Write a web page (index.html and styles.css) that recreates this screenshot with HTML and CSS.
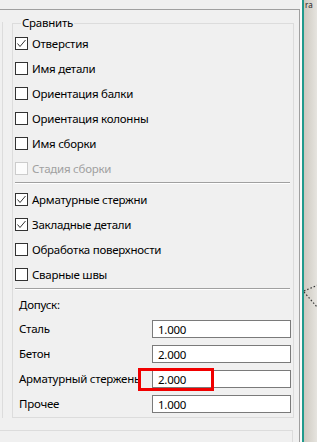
FILE: index.html
```html
<!DOCTYPE html>
<html lang="ru">
  <head>
    <meta charset="UTF-8" />
    <title>Сравнить</title>
    <link rel="stylesheet" href="styles.css">
  </head>
  <body>
    <div class="screen">
      <div class="panel">
        <div class="frame">
          <div class="page">
            <div class="group">
              <span class="legend">Сравнить</span>

              <label class="check-row">
                <span class="box checked"><svg width="11" height="11" viewBox="0 0 11 11"><polyline points="1.5,5.5 4,8.5 9.5,2" /></svg></span>
                Отверстия
              </label>
              <label class="check-row">
                <span class="box"></span>
                Имя детали
              </label>
              <label class="check-row">
                <span class="box"></span>
                Ориентация балки
              </label>
              <label class="check-row">
                <span class="box"></span>
                Ориентация колонны
              </label>
              <label class="check-row">
                <span class="box"></span>
                Имя сборки
              </label>
              <label class="check-row disabled">
                <span class="box"></span>
                Стадия сборки
              </label>

              <div class="separator first"></div>

              <label class="check-row">
                <span class="box checked"><svg width="11" height="11" viewBox="0 0 11 11"><polyline points="1.5,5.5 4,8.5 9.5,2" /></svg></span>
                Арматурные стержни
              </label>
              <label class="check-row">
                <span class="box checked"><svg width="11" height="11" viewBox="0 0 11 11"><polyline points="1.5,5.5 4,8.5 9.5,2" /></svg></span>
                Закладные детали
              </label>
              <label class="check-row">
                <span class="box"></span>
                Обработка поверхности
              </label>
              <label class="check-row">
                <span class="box"></span>
                Сварные швы
              </label>

              <div class="separator"></div>

              <div class="tol-title">Допуск:</div>

              <div class="tol-row">
                <span class="tol-label">Сталь</span>
                <input class="tol-input" type="text" value="1.000">
              </div>
              <div class="tol-row">
                <span class="tol-label">Бетон</span>
                <input class="tol-input" type="text" value="2.000">
              </div>
              <div class="tol-row">
                <span class="tol-label">Арматурный стержень</span>
                <input class="tol-input" type="text" value="2.000">
                <span class="highlight"></span>
              </div>
              <div class="tol-row">
                <span class="tol-label">Прочее</span>
                <input class="tol-input" type="text" value="1.000">
              </div>
            </div>
          </div>
          <div class="bottom-box"></div>
        </div>
      </div>
      <div class="teal"></div>
      <div class="side">
        <span class="side-text">ra</span>
        <svg class="side-lines" width="14" height="26" viewBox="0 0 14 26">
          <line x1="0" y1="8" x2="14" y2="2" />
          <line x1="0" y1="9" x2="13" y2="24" />
        </svg>
      </div>
    </div>
  </body>
</html>
```

FILE: styles.css
```css
* {
  margin: 0;
  padding: 0;
  box-sizing: border-box;
}

body {
  background: #f0f0f0;
  font-family: "Noto Sans", "Open Sans", Arial, sans-serif;
  font-size: 11.5px;
  letter-spacing: -0.25px;
  color: #000;
  overflow: hidden;
}

.screen {
  display: flex;
  width: 317px;
  height: 442px;
}

/* Left dialog area */
.panel {
  width: 302px;
  padding-top: 9px;
  border-right: 2px solid #fafafa;
}

.frame {
  width: 300px;
  height: 433px;
  border-top: 1px solid #a0a0a0;
  border-right: 1px solid #a0a0a0;
  padding-top: 12px;
}

.page {
  margin-left: 2px;
  border-left: 1px solid #dcdcdc;
  padding-left: 9px;
  padding-top: 1px;
}

.group {
  position: relative;
  width: 282px;
  border: 1px solid #dcdcdc;
  padding: 7px 0 1px 2px;
}

.legend {
  position: absolute;
  top: -9px;
  left: 8px;
  padding: 0 1px;
  background: #f0f0f0;
  line-height: 16px;
}

.check-row {
  display: flex;
  align-items: center;
  gap: 4px;
  height: 25px;
  line-height: 16px;
}

.box {
  width: 13px;
  height: 13px;
  border: 1px solid #333;
  background: #fff;
  display: flex;
  align-items: center;
  justify-content: center;
  flex-shrink: 0;
}

.box svg polyline {
  fill: none;
  stroke: #333;
  stroke-width: 1;
}

.check-row.disabled {
  color: #a0a0a0;
}

.check-row.disabled .box {
  border-color: #cccccc;
  background: #fcfcfc;
}

.separator {
  height: 2px;
  margin: 1px 3px 0 0;
  border-top: 1px solid #a0a0a0;
  border-bottom: 1px solid #ffffff;
}

.separator.first {
  margin-bottom: 3px;
}

.tol-title {
  padding: 7px 0 3px 4px;
  line-height: 16px;
  height: 26px;
}

.tol-row {
  position: relative;
  display: flex;
  justify-content: space-between;
  height: 25px;
  padding-left: 4px;
  padding-right: 2px;
}

.tol-label {
  line-height: 16px;
  padding-top: 5px;
  white-space: nowrap;
}

.tol-input {
  width: 139px;
  height: 18px;
  margin-top: 4px;
  border: 1px solid #7a7a7a;
  background: #fff;
  font: inherit;
  letter-spacing: -0.25px;
  color: #000;
  padding: 0 5px;
  line-height: 16px;
  outline: none;
}

.highlight {
  position: absolute;
  left: 123px;
  top: 2px;
  width: 76px;
  height: 23px;
  border: 3px solid #f00000;
}

.bottom-box {
  margin-top: 12px;
  width: 293px;
  height: 20px;
  border-top: 1px solid #dcdcdc;
  border-right: 1px solid #dcdcdc;
}

/* Right edge of the neighbouring window */
.teal {
  width: 2px;
  background: #1f9a8c;
}

.side {
  flex: 1;
  background: linear-gradient(90deg, #cdc9c0 0%, #e6e4df 100%);
  display: flex;
  flex-direction: column;
  overflow: hidden;
}

.side-text {
  margin-left: 1px;
  line-height: 10px;
  font-size: 8px;
  letter-spacing: 0;
  color: #222;
}

.side-lines {
  margin-top: 273px;
}

.side-lines line {
  stroke: #333;
  stroke-width: 1.2;
  stroke-dasharray: 1.5 2;
}
```
